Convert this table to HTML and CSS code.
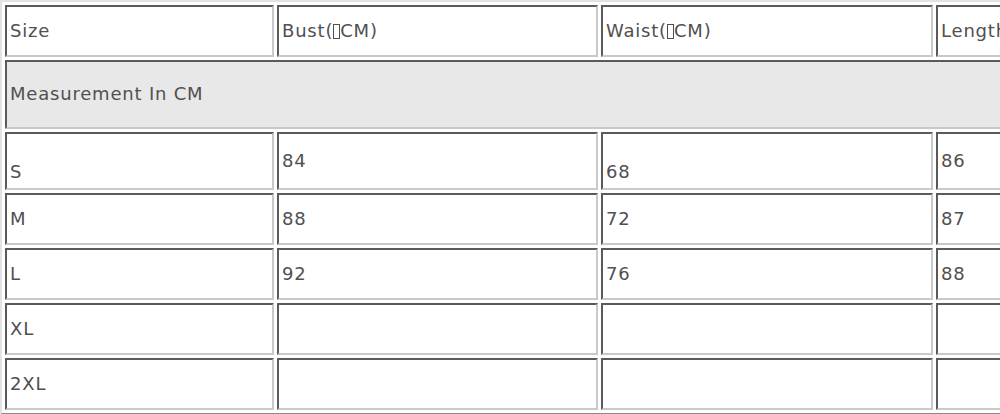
FILE: index.html
```html
<!DOCTYPE html>
<html>
<head>
<meta charset="utf-8">
<link rel="stylesheet" href="styles.css">
</head>
<body>
<table class="size-table">
  <colgroup>
    <col class="c1"><col class="c2"><col class="c3"><col class="c4">
  </colgroup>
  <tr class="r-head">
    <td>Size</td><td>Bust(<span class="tofu"></span>CM)</td><td>Waist(<span class="tofu"></span>CM)</td><td>Length</td>
  </tr>
  <tr class="r-title">
    <td colspan="4">Measurement In CM</td>
  </tr>
  <tr class="r-s">
    <td class="low">S</td><td>84</td><td class="low">68</td><td>86</td>
  </tr>
  <tr class="r-row"><td>M</td><td>88</td><td>72</td><td>87</td></tr>
  <tr class="r-row"><td>L</td><td>92</td><td>76</td><td>88</td></tr>
  <tr class="r-row"><td>XL</td><td></td><td></td><td></td></tr>
  <tr class="r-row"><td>2XL</td><td></td><td></td><td></td></tr>
</table>
</body>
</html>
```

FILE: styles.css
```css
html, body {
  margin: 0;
  padding: 0;
  background: #fff;
  overflow: hidden;
}

.size-table {
  table-layout: fixed;
  width: 1271px;
  border-collapse: separate;
  border-spacing: 3px;
  border: 2px solid;
  border-color: #e2e2e2 #8a8a8a #8a8a8a #e2e2e2;
  font-family: "DejaVu Sans", Verdana, sans-serif;
  font-size: 18px;
  letter-spacing: 0.8px;
  color: #505050;
}

.c1 { width: 269px; }
.c2 { width: 321px; }
.c3 { width: 332px; }
.c4 { width: 330px; }

.size-table td {
  box-sizing: border-box;
  border: 2px solid;
  border-color: #5a5a5a #c9c9c9 #c9c9c9 #5a5a5a;
  padding: 0 3px 2px;
  vertical-align: middle;
  text-align: left;
  white-space: nowrap;
}

.tofu {
  display: inline-block;
  box-sizing: border-box;
  width: 7px;
  height: 15px;
  border: 1.5px solid #505050;
  margin: 0;
  vertical-align: -2px;
}

.r-head td { height: 52px; }
.r-title td { height: 69px; background: #e8e8e8; }
.r-s td { height: 58px; }
.r-row td { height: 52px; }

.size-table td.low { padding-top: 22px; }
```
